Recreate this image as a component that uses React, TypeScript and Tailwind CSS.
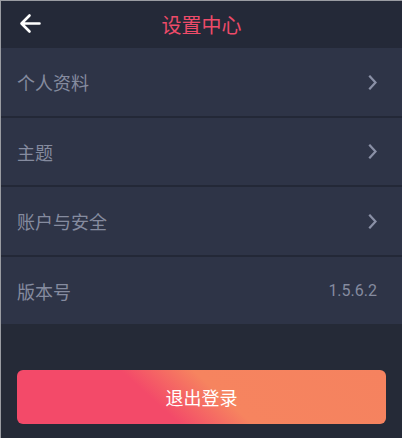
import React from "react";

const Chevron = () => (
  <svg width="10" height="15" viewBox="0 0 10 15" className="shrink-0">
    <path d="M2 1.5 L7.5 7.5 L2 13.5" fill="none" stroke="#8a90a6" strokeWidth="2.2" strokeLinecap="square" />
  </svg>
);

const rows: { label: string; h: string; value?: string }[] = [
  { label: "个人资料", h: "h-[68px]" },
  { label: "主题", h: "h-[67px]" },
  { label: "账户与安全", h: "h-[68px]" },
  { label: "版本号", h: "h-[67px]", value: "1.5.6.2" },
];

export default function App() {
  return (
    <div
      className="w-[402px] h-[438px] bg-[#252a37] border-l border-t border-[#9a9ca2] overflow-hidden flex flex-col"
      style={{ fontFamily: '"Noto Sans CJK SC", "Noto Sans", sans-serif' }}
    >
      <div className="h-[47px] shrink-0 bg-[#242938] relative flex items-center justify-center">
        <svg width="22" height="22" viewBox="0 0 22 22" className="absolute left-[18px] top-[12px]">
          <path d="M3 10.5 H20.5 M10.5 2.5 L2.5 10.5 L10.5 18.5" fill="none" stroke="#ffffff" strokeWidth="2.6" strokeLinecap="round" strokeLinejoin="round" />
        </svg>
        <span className="text-[20px] text-[#ee4b69] leading-none tracking-[0px]">设置中心</span>
      </div>
      <div className="flex flex-col">
        {rows.map((r, i) => (
          <div key={r.label} className="flex flex-col">
            <div className={`${r.h} bg-[#2e3447] flex items-center justify-between pl-[16px] pr-[24px]`}>
              <span className="text-[18px] text-[#858b9f] leading-none">{r.label}</span>
              {r.value ? (
                <span className="text-[16px] text-[#858b9f] leading-none pr-[1px]" style={{ fontFamily: 'Roboto, "Noto Sans", sans-serif' }}>
                  {r.value}
                </span>
              ) : (
                <Chevron />
              )}
            </div>
            {i < rows.length - 1 && <div className="h-[2px] bg-[#232837]" />}
          </div>
        ))}
      </div>
      <div className="px-[16px] pt-[46px]">
        <button className="w-[369px] h-[54px] rounded-[6px] bg-[linear-gradient(42deg,#f34a69_38%,#f6845f_55%,#f5825f_100%)] flex items-center justify-center">
          <span className="text-[18px] text-white leading-none">退出登录</span>
        </button>
      </div>
    </div>
  );
}
